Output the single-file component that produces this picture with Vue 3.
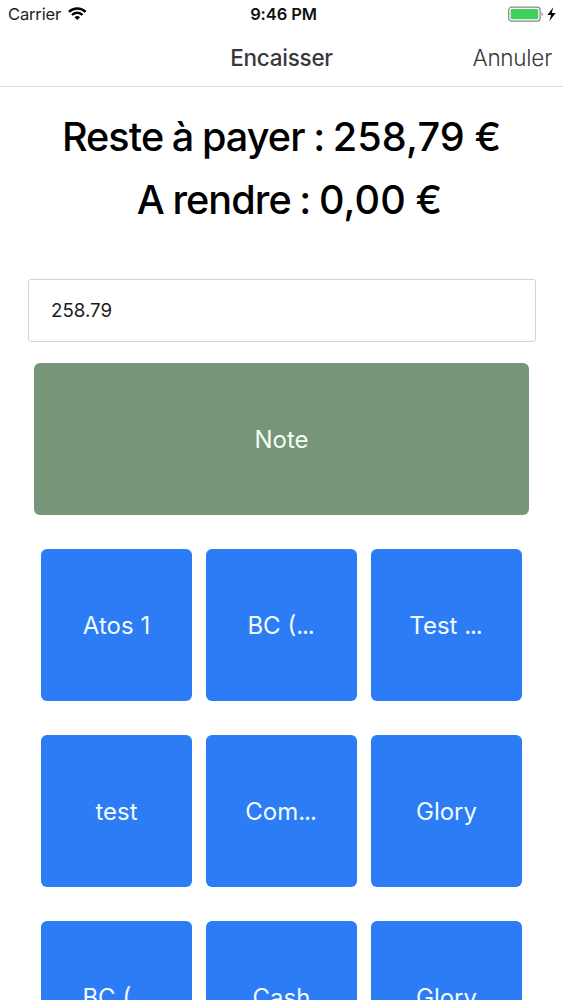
<script setup>
const methods = [
  { name: 'Atos 1' },
  { name: 'BC (', cut: true },
  { name: 'Test ', cut: true },
  { name: 'test' },
  { name: 'Com', cut: true },
  { name: 'Glory' },
  { name: 'BC (', cut: true },
  { name: 'Cash' },
  { name: 'Glory' },
]
</script>

<template>
  <div class="screen">
    <header class="top">
      <div class="status">
        <div class="carrier">
          <span class="carrier-name">Carrier</span>
          <svg class="wifi" width="18.5" height="13.5" viewBox="0 0 19 14">
            <g fill="none" stroke="#000" stroke-width="2.5">
              <path d="M0.9 5.1a12.2 12.2 0 0 1 17.2 0" />
              <path d="M4 8.3a7.8 7.8 0 0 1 11 0" />
            </g>
            <path d="M9.5 13.6L6.6 10.7a4.1 4.1 0 0 1 5.8 0z" fill="#000" />
          </svg>
        </div>
        <span class="clock">9:46 PM</span>
        <div class="power">
          <svg width="50" height="17" viewBox="0 0 50 17">
            <rect x="0.7" y="1.2" width="31.4" height="14" rx="3" fill="#fff" stroke="#85858a" stroke-width="1.2" />
            <rect x="2.6" y="3.1" width="27.6" height="10.2" rx="1.4" fill="#3fd159" />
            <path d="M33.7 6q2.2 2.1 0 4.4z" fill="#6f8292" />
            <path d="M45.3 1.2L39.4 9.1h3.7l-1.8 6.1 6.4-8.3h-4z" fill="#000" />
          </svg>
        </div>
      </div>
      <nav class="navbar">
        <h1 class="title">Encaisser</h1>
        <a class="cancel">Annuler</a>
      </nav>
    </header>
    <main class="content">
      <div class="amount due">Reste à payer : <span class="value">258,79 €</span></div>
      <div class="amount change">A rendre : <span class="value">0,00 €</span></div>
      <input class="field" type="text" value="258.79" />
      <button class="note">Note</button>
      <div class="grid">
        <button v-for="(m, i) in methods" :key="i" class="tile">{{ m.name }}<span v-if="m.cut" class="dots">...</span></button>
      </div>
    </main>
  </div>
</template>

<style>
body {
  margin: 0;
  background: #fff;
}
</style>

<style scoped>
.screen {
  height: 1000px;
  overflow: hidden;
  background: #fff;
  font-family: Inter, "Liberation Sans", sans-serif;
}
.top {
  height: 86px;
  border-bottom: 1px solid #d9d9dc;
}
.status {
  display: grid;
  grid-template-columns: 1fr auto 1fr;
  align-items: center;
  height: 28px;
  padding: 0 5px 0 8px;
}
.carrier {
  display: flex;
  align-items: center;
  gap: 7px;
}
.carrier-name {
  font-size: 16.5px;
  letter-spacing: -0.15px;
  color: #222226;
}
.clock {
  padding-left: 1px;
  font-size: 16.5px;
  font-weight: 600;
  letter-spacing: -0.1px;
  color: #111;
}
.power {
  display: flex;
  justify-content: flex-end;
}
.navbar {
  display: grid;
  grid-template-columns: 1fr auto 1fr;
  align-items: center;
  height: 58px;
  padding: 0 11px;
}
.title {
  grid-column: 2;
  margin: 0;
  font-size: 22.5px;
  font-weight: 500;
  line-height: 60px;
  letter-spacing: -0.25px;
  color: #38383b;
}
.cancel {
  justify-self: end;
  padding-bottom: 2px;
  font-size: 22.5px;
  font-weight: 300;
  letter-spacing: -0.25px;
  color: #38383b;
}
.content {
  display: flex;
  flex-direction: column;
  padding: 19px 27px 0;
}
.amount {
  height: 63px;
  font-size: 39.6px;
  font-weight: 500;
  line-height: 63px;
  letter-spacing: -0.94px;
  word-spacing: -1px;
  text-align: center;
  white-space: nowrap;
  color: #000;
}
.value {
  letter-spacing: 0.1px;
}
.change {
  padding-left: 16px;
}
.field {
  box-sizing: border-box;
  width: 508px;
  height: 63px;
  margin: 47px 0 0 1px;
  padding: 0 22px;
  border: 1px solid #d3d3d6;
  border-radius: 3px;
  background: #fff;
  font: 400 18.7px Inter, "Liberation Sans", sans-serif;
  color: #1c1c20;
  outline: none;
}
button {
  display: block;
  padding: 0;
  border: 0;
  border-radius: 6px;
  font: 400 24px Inter, "Liberation Sans", sans-serif;
  color: #f2fbff;
}
.note {
  height: 152px;
  margin: 21px 7px 0;
  background: #779579;
  color: #f2fff2;
}
.grid {
  display: grid;
  grid-template-columns: repeat(3, 151px);
  grid-auto-rows: 152px;
  gap: 34px 14px;
  margin: 34px 0 0 14px;
}
.tile {
  background: #2b7cf5;
}
.dots {
  margin-right: 2px;
  letter-spacing: -1.1px;
}
</style>
